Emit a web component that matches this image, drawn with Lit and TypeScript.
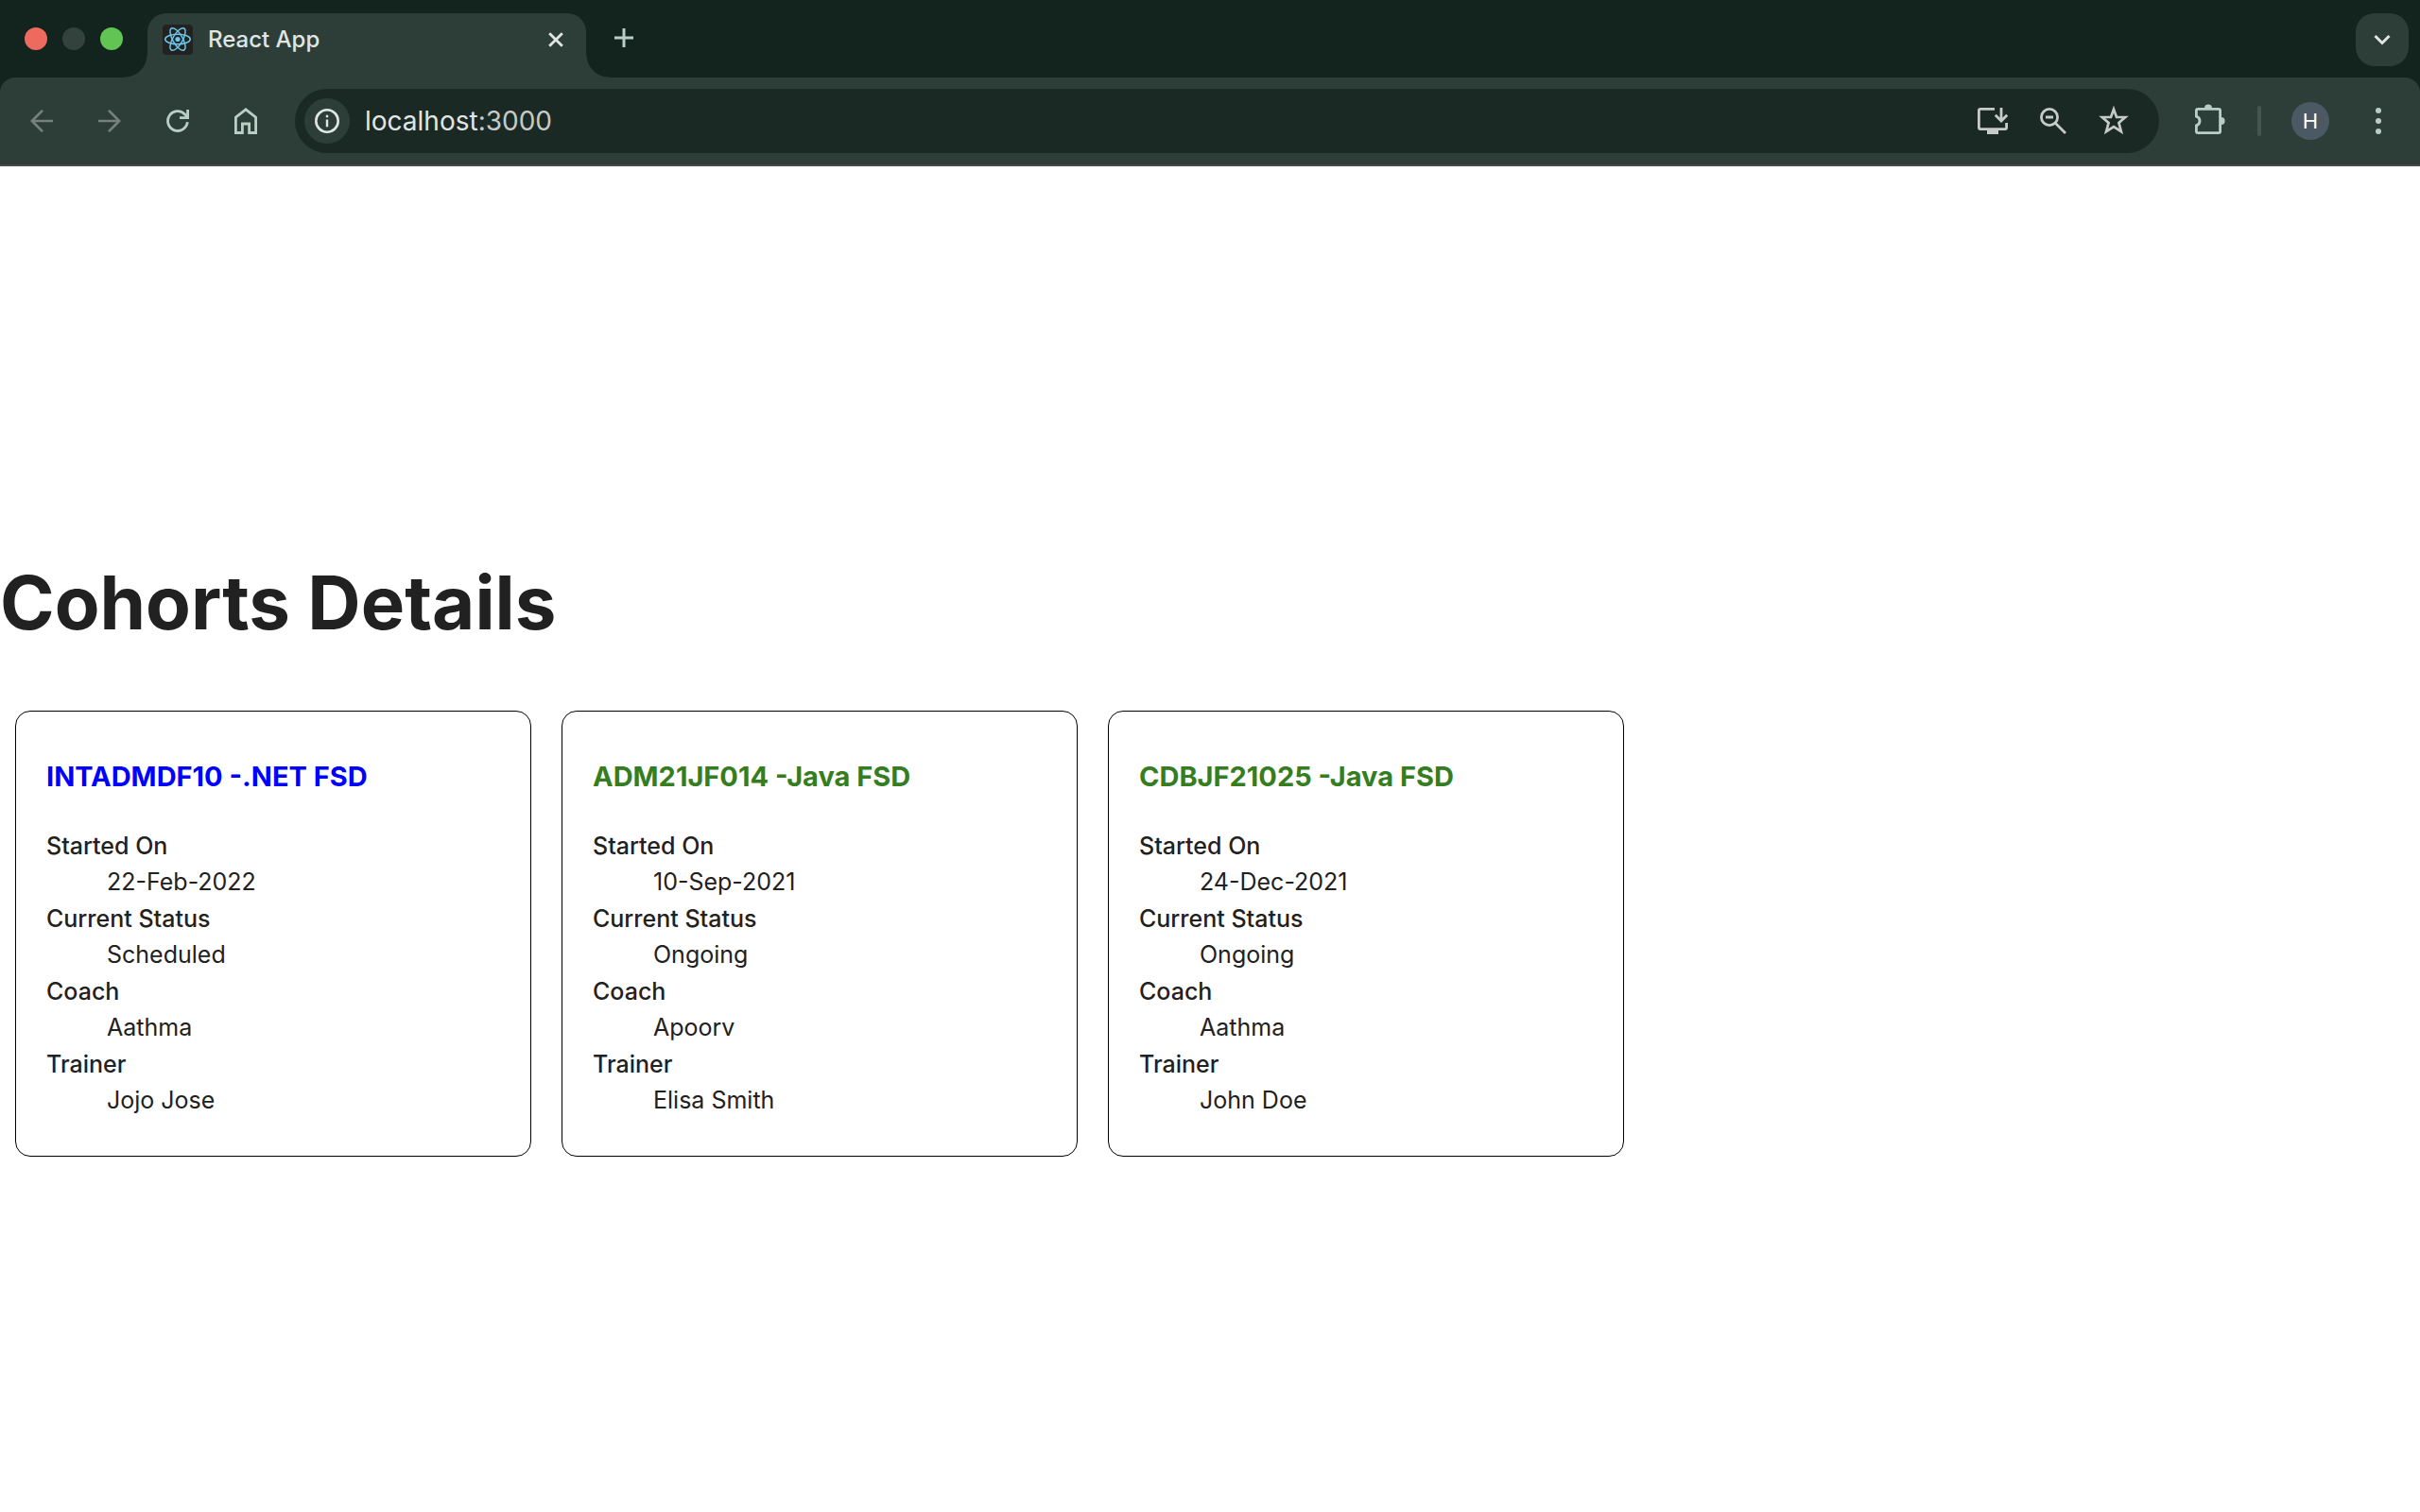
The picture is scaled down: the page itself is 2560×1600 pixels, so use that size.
import { LitElement, html, css, svg } from "lit";
import { customElement, property } from "lit/decorators.js";

interface Cohort {
  code: string;
  technology: string;
  startedOn: string;
  status: "Scheduled" | "Ongoing";
  coach: string;
  trainer: string;
}

const COHORTS: Cohort[] = [
  { code: "INTADMDF10", technology: ".NET FSD", startedOn: "22-Feb-2022", status: "Scheduled", coach: "Aathma", trainer: "Jojo Jose" },
  { code: "ADM21JF014", technology: "Java FSD", startedOn: "10-Sep-2021", status: "Ongoing", coach: "Apoorv", trainer: "Elisa Smith" },
  { code: "CDBJF21025", technology: "Java FSD", startedOn: "24-Dec-2021", status: "Ongoing", coach: "Aathma", trainer: "John Doe" },
];

@customElement("cohort-card")
export class CohortCard extends LitElement {
  @property({ attribute: false }) cohort!: Cohort;

  static styles = css`
    :host {
      display: block;
      box-sizing: border-box;
      width: 546px;
      padding: 16px 31px;
      border: 1px solid #000;
      border-radius: 16px;
    }
    .title {
      margin: 30px 0 32px;
      padding-left: 1px;
      font-size: 29px;
      line-height: 45px;
      font-weight: 700;
      color: blue;
    }
    .ongoing {
      color: #347d21;
    }
    .facts {
      margin: 0 0 23px;
      padding-left: 1px;
      font-size: 25px;
    }
    .term {
      font-weight: 500;
      line-height: 38px;
    }
    .value {
      margin: 0 0 0 64px;
      line-height: 39px;
    }
  `;

  render() {
    const c = this.cohort;
    const facts = [
      ["Started On", c.startedOn],
      ["Current Status", c.status],
      ["Coach", c.coach],
      ["Trainer", c.trainer],
    ];
    return html`
      <h3 class="title ${c.status === "Ongoing" ? "ongoing" : ""}">${c.code} -${c.technology}</h3>
      <dl class="facts">
        ${facts.map(([term, value]) => html`<dt class="term">${term}</dt><dd class="value">${value}</dd>`)}
      </dl>
    `;
  }
}

@customElement("cohorts-page")
export class CohortsPage extends LitElement {
  static styles = css`
    :host {
      flex: 1;
      display: flex;
      flex-direction: column;
      justify-content: center;
      background: #fff;
      color: #212121;
    }
    .heading {
      margin: 57px 0 53px;
      font-size: 78px;
      line-height: 90px;
      font-weight: 700;
    }
    .cards {
      display: flex;
      flex-wrap: wrap;
      gap: 32px;
      padding: 16px;
    }
  `;

  render() {
    return html`
      <h1 class="heading">Cohorts Details</h1>
      <div class="cards">
        ${COHORTS.map((c) => html`<cohort-card .cohort=${c}></cohort-card>`)}
      </div>
    `;
  }
}

const icon = (size: number, body: unknown) =>
  html`<svg class="icon" width=${size} height=${size} viewBox="0 0 ${size} ${size}" aria-hidden="true">${body}</svg>`;

const ICONS = {
  react: icon(32, svg`
    <rect width="32" height="32" rx="4" fill="#222"/>
    <g fill="none" stroke="#6cc6e8" stroke-width="1.5">
      <ellipse cx="16" cy="15.5" rx="13.3" ry="5.2"/>
      <ellipse cx="16" cy="15.5" rx="13.3" ry="5.2" transform="rotate(60 16 15.5)"/>
      <ellipse cx="16" cy="15.5" rx="13.3" ry="5.2" transform="rotate(120 16 15.5)"/>
    </g>
    <circle cx="16" cy="15.5" r="2.6" fill="#6cc6e8"/>`),
  close: icon(16, svg`<path d="M1.2 1.2 14.8 14.8M14.8 1.2 1.2 14.8" fill="none" stroke="currentColor" stroke-width="2.8"/>`),
  plus: icon(20, svg`<path d="M10 0V20M0 10H20" fill="none" stroke="currentColor" stroke-width="3"/>`),
  chevron: icon(18, svg`<path d="M1.5 5 9 12.5 16.5 5" fill="none" stroke="currentColor" stroke-width="3"/>`),
  back: icon(24, svg`<path d="M24 12H2M13 .9 1.8 12 13 23.1" fill="none" stroke="currentColor" stroke-width="2.7"/>`),
  forward: icon(24, svg`<path d="M0 12H22M11 .9 22.2 12 11 23.1" fill="none" stroke="currentColor" stroke-width="2.7"/>`),
  reload: icon(24, svg`<path d="M22.3 13.2A10.4 10.4 0 1 1 19.6 5L22.5 8M22.6 0V8.6H14" fill="none" stroke="currentColor" stroke-width="2.8"/>`),
  home: icon(28, svg`<path d="M3.4 10.2 14 1.8 24.6 10.2V26.5H17.6V17H10.4V26.5H3.4Z" fill="none" stroke="currentColor" stroke-width="2.8"/>`),
  info: icon(26, svg`<circle cx="13" cy="13" r="11.7" fill="none" stroke="currentColor" stroke-width="2.6"/><path d="M13 11.4V19.2M13 6.8V9.2" stroke="currentColor" stroke-width="2.4"/>`),
  install: icon(32, svg`<path d="M18 3.4H3Q1.4 3.4 1.4 5V23Q1.4 24.6 3 24.6H29Q30.6 24.6 30.6 23V18" fill="none" stroke="currentColor" stroke-width="2.8"/><path d="M10 25H22V30H10Z" fill="currentColor"/><path d="M25 2V16M18.8 9.8 25 16 31.2 9.8" fill="none" stroke="currentColor" stroke-width="2.8"/>`),
  zoomOut: icon(28, svg`<circle cx="10" cy="10" r="8.6" fill="none" stroke="currentColor" stroke-width="2.8"/><path d="M6 10H14M16 16 27 27" fill="none" stroke="currentColor" stroke-width="2.8"/>`),
  star: icon(32, svg`<path d="M16 3.6 19 12H28.2L21.4 17.9 23.9 27.2 16 22.1 8.1 27.2 10.6 17.9 3.8 12H13Z" fill="none" stroke="currentColor" stroke-width="2.7"/>`),
  puzzle: icon(36, svg`<path d="M3 5.4H25Q26.6 5.4 26.6 7V29Q26.6 30.6 25 30.6H3Q1.4 30.6 1.4 29V22.8A5 5 0 0 0 1.4 13.2V7Q1.4 5.4 3 5.4Z" fill="none" stroke="currentColor" stroke-width="2.8"/><path d="M10 4.6A4 4 0 0 1 18 4.6ZM27.4 14A4.2 4 0 0 1 27.4 22Z" fill="currentColor"/>`),
  more: icon(28, svg`<circle cx="14" cy="3" r="3" fill="currentColor"/><circle cx="14" cy="14" r="3" fill="currentColor"/><circle cx="14" cy="25" r="3" fill="currentColor"/>`),
};

@customElement("browser-chrome")
export class BrowserChrome extends LitElement {
  static styles = css`
    :host {
      display: block;
      background: #13231d;
      color: #e1e6e3;
    }
    .icon {
      display: block;
    }
    button {
      display: grid;
      place-items: center;
      margin: 0;
      padding: 0;
      border: 0;
      background: none;
      color: inherit;
      font: inherit;
    }
    .strip {
      display: flex;
      align-items: stretch;
      height: 68px;
      padding: 14px 12px 0 26px;
    }
    .lights {
      display: flex;
      gap: 16px;
      padding-top: 15px;
      width: 130px;
    }
    .light {
      width: 24px;
      height: 24px;
      border-radius: 50%;
      background: #33423d;
    }
    .red {
      background: #ed6a5e;
    }
    .green {
      background: #61c554;
    }
    .tab {
      position: relative;
      display: flex;
      align-items: center;
      box-sizing: border-box;
      width: 464px;
      padding: 0 20px 12px 16px;
      border-radius: 20px 20px 0 0;
      background: #2d3e38;
      font-size: 24px;
      line-height: 30px;
    }
    .tab::before,
    .tab::after {
      content: "";
      position: absolute;
      bottom: 0;
      width: 24px;
      height: 24px;
    }
    .tab::before {
      right: 100%;
      background: radial-gradient(circle at 0 0, transparent 23px, #2d3e38 24px);
    }
    .tab::after {
      left: 100%;
      background: radial-gradient(circle at 100% 0, transparent 23px, #2d3e38 24px);
    }
    .name {
      flex: 1;
      padding-left: 16px;
      font-weight: 500;
    }
    .close {
      width: 24px;
      height: 32px;
    }
    .new-tab {
      width: 40px;
      height: 52px;
      margin-left: 20px;
      color: #b9cfc6;
    }
    .search-tabs {
      width: 56px;
      height: 56px;
      margin-left: auto;
      border-radius: 20px;
      background: #2d3e38;
    }
    .bar {
      display: flex;
      align-items: center;
      padding: 12px 30px 12px 8px;
      border-bottom: 2px solid #474b49;
      border-radius: 16px 16px 0 0;
      background: #2d3e38;
      color: #b9cfc6;
    }
    .tool {
      width: 72px;
      height: 48px;
    }
    .faded {
      color: #75817c;
    }
    .address {
      flex: 1;
      display: flex;
      align-items: center;
      height: 68px;
      margin-left: 16px;
      padding: 0 16px 0 10px;
      border-radius: 34px;
      background: #1a2923;
      color: #c6cac8;
    }
    .site {
      width: 48px;
      height: 48px;
      border-radius: 50%;
      background: #2d3e38;
      color: #e1e6e3;
    }
    .url {
      flex: 1;
      padding-left: 16px;
      font-size: 28px;
      line-height: 36px;
    }
    .host {
      color: #e1e6e3;
    }
    .action {
      width: 64px;
      height: 48px;
    }
    .extensions {
      width: 68px;
      height: 48px;
      margin-left: 22px;
    }
    .divider {
      width: 4px;
      height: 32px;
      margin: 0 32px 0 14px;
      border-radius: 2px;
      background: #46564f;
    }
    .avatar {
      width: 40px;
      height: 40px;
      margin-right: 38px;
      border-radius: 50%;
      background: #4a5964;
      color: #fff;
      font-size: 22px;
    }
    .more {
      width: 28px;
      height: 48px;
    }
  `;

  render() {
    return html`
      <div class="strip">
        <div class="lights">
          <span class="light red"></span><span class="light"></span><span class="light green"></span>
        </div>
        <div class="tab">
          ${ICONS.react}
          <span class="name">React App</span>
          <button class="close" aria-label="Close tab">${ICONS.close}</button>
        </div>
        <button class="new-tab" aria-label="New tab">${ICONS.plus}</button>
        <button class="search-tabs" aria-label="Search tabs">${ICONS.chevron}</button>
      </div>
      <div class="bar">
        <button class="tool faded" aria-label="Back">${ICONS.back}</button>
        <button class="tool faded" aria-label="Forward">${ICONS.forward}</button>
        <button class="tool" aria-label="Reload">${ICONS.reload}</button>
        <button class="tool" aria-label="Home">${ICONS.home}</button>
        <div class="address">
          <button class="site" aria-label="Site information">${ICONS.info}</button>
          <span class="url"><span class="host">localhost</span>:3000</span>
          <button class="action" aria-label="Install app">${ICONS.install}</button>
          <button class="action" aria-label="Zoom">${ICONS.zoomOut}</button>
          <button class="action" aria-label="Bookmark this tab">${ICONS.star}</button>
        </div>
        <button class="extensions" aria-label="Extensions">${ICONS.puzzle}</button>
        <span class="divider"></span>
        <button class="avatar" aria-label="Profile">H</button>
        <button class="more" aria-label="Menu">${ICONS.more}</button>
      </div>
    `;
  }
}

@customElement("app-root")
export class AppRoot extends LitElement {
  static styles = css`
    :host {
      display: flex;
      flex-direction: column;
      min-height: 100vh;
      font-family: Inter, "Liberation Sans", sans-serif;
    }
  `;

  render() {
    return html`<browser-chrome></browser-chrome><cohorts-page></cohorts-page>`;
  }
}
